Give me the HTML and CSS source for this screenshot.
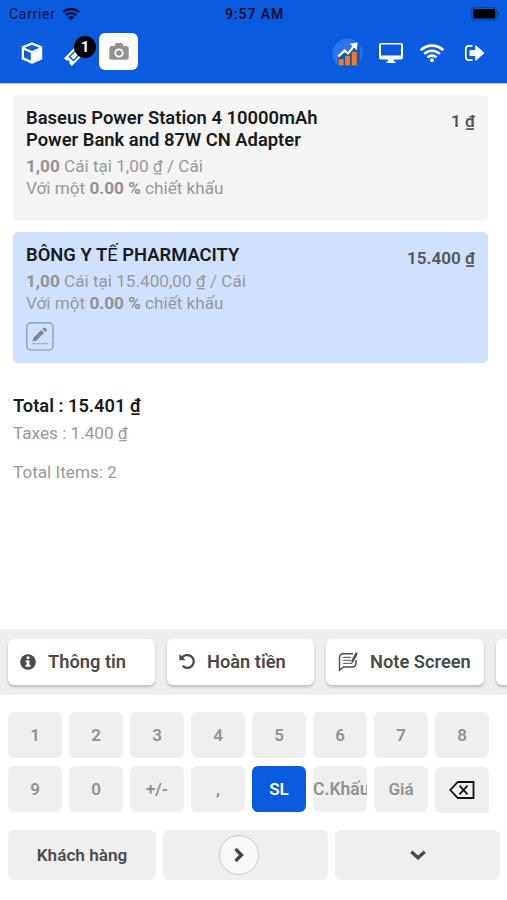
FILE: index.html
```html
<!DOCTYPE html>
<html lang="vi">
<head>
<meta charset="utf-8">
<title>POS</title>
<link rel="stylesheet" href="styles.css">
</head>
<body>
<div class="screen">
  <header class="top">
    <div class="status">
      <div class="carrier"><span>Carrier</span>
        <svg width="18" height="14" viewBox="0 0 18 14" fill="none" stroke="#06153a" stroke-width="2.4"><path d="M1 5.2a11.5 11.5 0 0 1 16 0M3.8 8.3a7.4 7.4 0 0 1 10.400 0"/><path d="M9 13.500 5.900 10.400a4.400 4.400 0 0 1 6.200 0z" fill="#06153a" stroke="none"/></svg>
      </div>
      <div class="clock">9:57 AM</div>
      <svg class="battery" width="29" height="14" viewBox="0 0 29 14"><rect x=".6" y=".6" width="25" height="12.4" rx="3.6" fill="none" stroke="#0843a6" stroke-width="1.2"/><rect x="2" y="2" width="22.3" height="9.6" rx="2.2"/><path d="M27 4.800v4q1.300-.5 1.300-2t-1.300-2z" fill="#0843a6"/></svg>
    </div>
    <nav class="tools">
      <svg class="cube" width="22" height="22" viewBox="0 0 22 22"><path d="M11 1.200 20.500 5v11.800L11 21 1.500 16.800V5z" fill="#fff" stroke="#fff" stroke-width="1.500" stroke-linejoin="round"/><path d="M3.500 5.700 11 2.800l7.500 2.900-7.500 3.200zM11.900 10.700l7.200-3v8.500l-7.200 3.100z" fill="#0a5bdf"/><path d="M11.500 10.500h1v9h-1zM12 10.700l7.500-3.200v9L12 19.800z" fill="#fff"/><path d="M3 8l6.800 2.900v7.500L3 15.600z" fill="#0a5bdf"/></svg>
      <div class="ticket">
        <svg width="22" height="22" viewBox="0 0 22 22"><g transform="rotate(-45 11 11)"><path d="M1 5.500h20v3.400a2.200 2.200 0 0 0 0 4.200v3.400H1v-3.400a2.200 2.200 0 0 0 0-4.200z" fill="#fff"/><path d="M5.200 7.500h11.600v7H5.200z" fill="#0a5bdf"/><path d="M6.800 9h8.400v4H6.800z" fill="#fff"/></g></svg>
        <span class="badge">1</span>
      </div>
      <div class="camera"><svg width="20" height="18" viewBox="0 0 20 18"><path d="M2.500 3h3l1-2q.4-.9 1.400-.9h4.200q1 0 1.400.9l1 2h3q2.200 0 2.200 2.200v9.400q0 2.200-2.200 2.200h-15q-2.200 0-2.200-2.200V5.200q0-2.200 2.200-2.200z" fill="#929292"/><circle cx="10" cy="10" r="3.700" fill="#929292" stroke="#fff" stroke-width="1.800"/></svg></div>
      <svg class="chart" width="31" height="31" viewBox="0 0 32 32"><circle cx="16" cy="16" r="15.500" fill="#2b76ed"/><path d="M6 21 25 6l4 2v17q-4 5-10 6.500h-6L6 27z" fill="#165bae"/><path d="M7 22h5v6H7zM13.700 18.500h4.800V28h-4.800zM20.500 14.500h5V28h-5z" fill="#f07b21"/><path d="m6.500 19 6.500-6 3.500 3 6.500-8" fill="none" stroke="#fff" stroke-width="2.300"/><path d="m18.500 6 7.800-1.300-.5 8z" fill="#fff"/></svg>
      <svg class="monitor" width="26" height="22" viewBox="0 0 26 22"><path d="M3 1h20q2 0 2 2v12.500q0 2-2 2h-7v2h1.500V21h-9v-1.500H10v-2H3q-2 0-2-2V3q0-2 2-2z" fill="#fff"/><path d="M3 2.500h20v11H3z" fill="#0a5bdf"/></svg>
      <svg class="wifi" width="26" height="20" viewBox="0 0 26 20" fill="none" stroke="#fff" stroke-width="2.700"><path d="M1.700 7.200a16 16 0 0 1 22.600 0M5.300 10.900a11 11 0 0 1 15.400 0M8.700 14.400a6.100 6.100 0 0 1 8.600 0"/><circle cx="13" cy="17.200" r="2" fill="#fff" stroke="none"/></svg>
      <svg class="logout" width="22" height="18" viewBox="0 0 22 18"><path d="M8.500 1.800H5Q1.800 1.800 1.800 5v8q0 3.200 3.200 3.200h3.500" fill="none" stroke="#fff" stroke-width="1.700"/><path d="M6.200 6h5V1.700q.5-.7 1.200 0l7.600 6.700q.6.600 0 1.200l-7.600 6.700q-.7.700-1.200 0V12h-5q-.7 0-.7-.7V6.700q0-.7.700-.7z" fill="#fff"/></svg>
    </nav>
  </header>

  <main class="order">
    <article class="line">
      <div class="detail">
        <h2>Baseus Power Station 4 10000mAh Power Bank and 87W CN Adapter</h2>
        <p><b>1,00</b> Cái tại 1,00 ₫ / Cái</p>
        <p>Với một <b>0.00 %</b> chiết khấu</p>
      </div>
      <div class="price">1 ₫</div>
    </article>
    <article class="line selected">
      <div class="detail">
        <h2>BÔNG Y T<span class="thin">Ế</span> PHARMACITY</h2>
        <p><b>1,00</b> Cái tại 15.400,00 ₫ / Cái</p>
        <p>Với một <b>0.00 %</b> chiết khấu</p>
        <svg class="edit" width="28" height="29" viewBox="0 0 28 29"><rect x=".8" y=".8" width="26.200" height="27.200" rx="4" fill="none" stroke="#8b929c" stroke-width="1.200"/><path d="m6.500 19.500 1-3.800L15.200 8l2.900 2.900-7.700 7.600zM16.400 7l1.300-1.200q.9-.6 1.700.2l1.100 1.100q.8.900.1 1.700l-1.300 1.200z" fill="#858585"/><path d="M6 21.700h16.500" stroke="#a3a8ae" stroke-width="1"/></svg>
      </div>
      <div class="price">15.400 ₫</div>
    </article>
    <section class="totals">
      <div class="total">Total : 15.401 ₫</div>
      <div class="taxes">Taxes : 1.400 ₫</div>
      <div class="items">Total Items: 2</div>
    </section>
  </main>

  <div class="actions">
    <button class="action"><svg width="16" height="16" viewBox="0 0 16 16"><circle cx="8" cy="8" r="7.800" fill="#4b4b4b"/><path d="M6.700 2.500h2.700v2.400H6.700zM5.700 6.300h3.700v4.500h1.100v2H5.500v-2h1.200V8.300h-1z" fill="#fff"/></svg><span>Thông tin</span></button>
    <button class="action"><svg width="16" height="17" viewBox="0 0 16 17"><path d="M2.800 5.200a6.400 6.400 0 1 1 .9 7.700" fill="none" stroke="#4b4b4b" stroke-width="2.300"/><path d="M.4 1v6.300h6.300z" fill="#4b4b4b"/></svg><span>Hoàn tiền</span></button>
    <button class="action note"><svg width="21" height="21" viewBox="0 0 21 21" fill="none" stroke="#4b4b4b"><path d="M15 2.700H5.500q-4 0-4 4v12.600l4-3.300h8.500q4 0 4-4V9" stroke-width="1.400"/><path d="M5 6.300h8M5 9.300h8M5 12.300h9" stroke-width="1"/><path d="m14.300 10.500 4.500-8.700" stroke-width="2.500"/><path d="m13.700 12.400.2-2 1.200.7z" fill="#4b4b4b" stroke-width=".5"/></svg><span>Note Screen</span></button>
    <button class="action"></button>
  </div>

  <section class="keypad">
    <button>1</button><button>2</button><button>3</button><button>4</button><button>5</button><button>6</button><button>7</button><button>8</button>
    <button>9</button><button>0</button><button>+/-</button><button>,</button><button class="active">SL</button><button class="discount">C.Khấu</button><button>Giá</button>
    <button class="erase"><svg width="26" height="18" viewBox="0 0 26 18" fill="none" stroke="#111" stroke-width="1.800"><path d="M8.800 1H24.500v16H8.800L1.300 9zM10.500 4.700l8 8.600M18.500 4.700l-8 8.600"/></svg></button>
  </section>

  <footer class="bottom">
    <button class="customer">Khách hàng</button>
    <button><span class="round"><svg width="14" height="16" viewBox="0 0 14 16"><path d="m3.500 2 6 6-6 6" fill="none" stroke="#444" stroke-width="3.300"/></svg></span></button>
    <button><svg width="18" height="12" viewBox="0 0 18 12"><path d="m2.300 2.800 6.700 6 6.700-6" fill="none" stroke="#4b4b4b" stroke-width="3.300"/></svg></button>
  </footer>
</div>
</body>
</html>
```
FILE: styles.css
```css
* { box-sizing: border-box; }
body { margin: 0; background: #fff; font-family: Roboto, "Noto Sans", sans-serif; }
svg { display: block; flex: none; }
h2, p { margin: 0; }
button { border: 0; padding: 0; margin: 0; font: inherit; }
.screen { width: 507px; height: 900px; overflow: hidden; display: flex; flex-direction: column; }

.top { height: 84px; background: #0a5bdf; border-bottom: 1px solid #a9c8f8; flex: none; }
.status { height: 27px; display: grid; grid-template-columns: 1fr auto 1fr; align-items: center; padding: 0 7px 0 9px; color: #06153a; font-size: 14px; }
.carrier { display: flex; align-items: center; gap: 6px; letter-spacing: .7px; }
.clock { font-weight: 600; letter-spacing: .9px; color: #04102c; }
.battery { justify-self: end; }
.tools { height: 50px; display: flex; align-items: center; padding: 2px 21px 0; }
.ticket { position: relative; margin-left: 21px; padding-top: 3px; }
.badge { position: absolute; left: 10px; top: -5px; width: 22px; height: 22px; border-radius: 50%; background: #000; color: #fff; font-size: 15px; font-weight: 700; line-height: 22px; text-align: center; }
.camera { width: 39px; height: 37px; margin: -3px 0 0 13px; background: #fff; border-radius: 6px; display: flex; align-items: center; justify-content: center; }
.chart { margin-left: auto; }
.monitor { margin-left: 15px; }
.wifi { margin-left: 15px; }
.logout { margin-left: 19px; }

.order { height: 545px; padding: 11px 19px 0 13px; flex: none; }
.line { height: 126px; margin-bottom: 11px; padding: 12px 13px 0; background: #f4f4f4; border-radius: 5px; display: flex; justify-content: space-between; }
.line.selected { height: 131px; background: #cfe1fe; }
.detail { width: 310px; }
.detail h2 { font-size: 18.4px; line-height: 22px; font-weight: 600; color: #1b1b1b; margin-bottom: 4px; }
.thin { font-weight: 400; }
.detail p { font-size: 17.15px; line-height: 22px; color: #999; }
.detail b { font-weight: 700; color: #929292; }
.edit { margin-top: 8px; }
.price { font-size: 17.15px; line-height: 22px; font-weight: 600; color: #555; padding-top: 3px; }
.totals { padding-top: 21px; color: #999; font-size: 17.15px; }
.total { font-size: 18.3px; line-height: 22px; font-weight: 600; color: #1b1b1b; }
.taxes { line-height: 22px; margin-top: 5px; }
.items { line-height: 22px; margin-top: 17px; }

.actions { height: 66px; padding: 10px 0 0 8px; background: #eee; display: flex; gap: 12px; flex: none; }
.action { width: 147px; height: 46px; flex: none; padding: 0 0 1px 12px; border-radius: 6px; background: #fff; box-shadow: 0 2px 3px rgba(0,0,0,.22); display: flex; align-items: center; gap: 12px; font-size: 18.3px; font-weight: 600; color: #4b4b4b; }
.action.note { width: 158px; gap: 11px; }

.keypad { display: grid; grid-template-columns: repeat(8, 54px); grid-auto-rows: 46px; gap: 8px 7px; padding: 17px 0 0 8px; }
.keypad button { background: #efefef; border-radius: 6px; color: #929292; font-size: 17px; font-weight: 600; overflow: hidden; display: flex; align-items: center; justify-content: center; white-space: nowrap; }
.keypad .active { background: #0a5bdf; color: #fff; }
.keypad .discount { justify-content: flex-start; font-size: 17.5px; }
.keypad .erase { margin: 1px 0 -1px; border-bottom-right-radius: 0; }

.bottom { display: grid; grid-template-columns: 148px 165px 165px; gap: 7px; padding: 18px 0 0 8px; }
.bottom button { height: 50px; background: #efefef; border-radius: 6px; display: flex; align-items: center; justify-content: center; font-size: 17.15px; font-weight: 600; color: #4b4b4b; }
.round { width: 40px; height: 40px; margin-right: 14px; border: 1px solid #c9c9c9; border-radius: 50%; background: #f8f8f8; display: flex; align-items: center; justify-content: center; }
```
